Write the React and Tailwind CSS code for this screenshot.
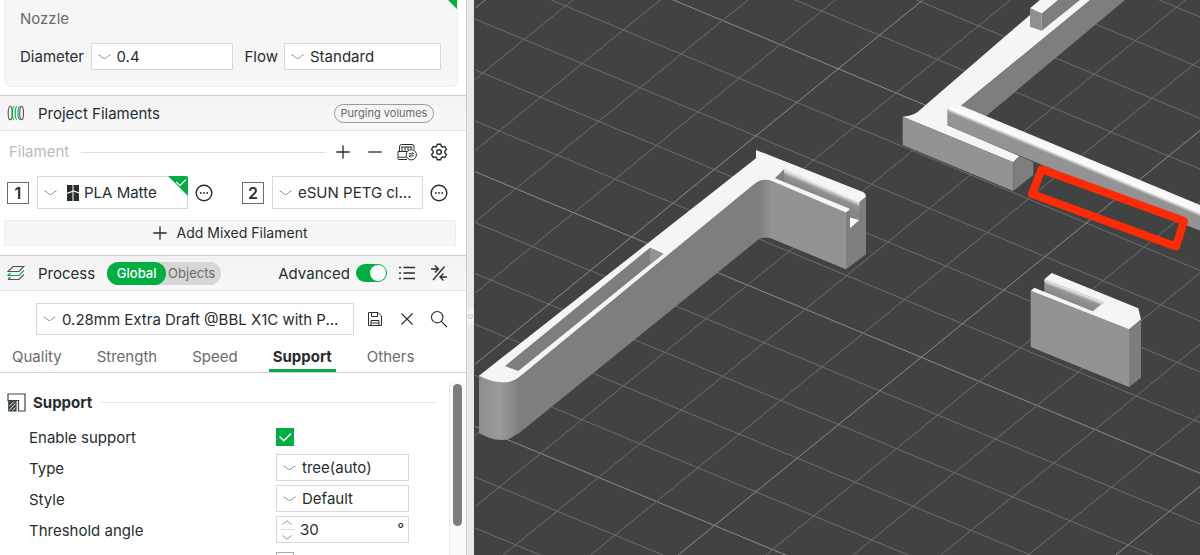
import React, { useState } from 'react';

const Chevron = ({ className = '' }) => (
  <svg viewBox="0 0 13 6" fill="none" stroke="#8f9394" className={`w-[13px] h-1.5 pointer-events-none ${className}`}>
    <path d="M0.5 1 C3.5 1.8 4.5 4.5 6.5 4.5 S9.5 1.8 12.5 1" />
  </svg>
);

const SelectBox = ({ id, label, value, className = '', pad = 'pl-[25px]', children }) => (
  <div className={`relative flex items-center bg-white border border-[#d9d9d9] ${className}`}>
    <Chevron className="absolute left-1.5" />
    {children}
    <select id={id} aria-label={label} className={`w-full h-full pt-0.5 appearance-none bg-transparent outline-none ${pad}`}>
      <option>{value}</option>
    </select>
  </div>
);

const IconButton = ({ label, children, onClick }) => (
  <button aria-label={label} onClick={onClick} className="w-5 h-5 shrink-0 flex items-center justify-center text-[#262e30]">
    {children}
  </button>
);

const MoreIcon = () => (
  <svg viewBox="0 0 18 18" className="w-[18px] h-[18px]" fill="none" stroke="currentColor" strokeWidth="1.4">
    <circle cx="9" cy="9" r="7.8" />
    <g fill="currentColor" stroke="none">
      <circle cx="5.8" cy="9" r="0.9" />
      <circle cx="9" cy="9" r="0.9" />
      <circle cx="12.2" cy="9" r="0.9" />
    </g>
  </svg>
);

const PlusIcon = () => (
  <svg viewBox="0 0 14 14" className="w-3.5 h-3.5" fill="none" stroke="currentColor" strokeWidth="1.3">
    <path d="M7 0.3V13.7M0.3 7H13.7" />
  </svg>
);

const MinusIcon = () => (
  <svg viewBox="0 0 14 14" className="w-3.5 h-3.5" fill="none" stroke="currentColor" strokeWidth="1.3">
    <path d="M0.3 7H13.7" />
  </svg>
);

const AmsIcon = () => (
  <svg viewBox="0 0 20 18" className="w-5 h-[18px]" fill="none" stroke="currentColor" strokeWidth="1">
    <path d="M2.5 8V3.5Q2.5 1.5 4.5 1.5H15Q17 1.5 17 3.5V6.5" />
    <path d="M5 4V8M8 4V8M11 4V7.5M14 4V6M4 4H15.5" />
    <path d="M10 8.5H1V15.5Q1 16.5 2 16.5H10M1.5 14.2H9.5" />
    <circle cx="14.3" cy="11.8" r="5.1" />
    <path d="M11.8 10.8H16.6L15.2 9.3M16.8 12.9H12L13.4 14.4" />
  </svg>
);

const GearIcon = () => (
  <svg viewBox="0 0 18 18" className="w-[18px] h-[18px]" fill="none" stroke="currentColor" strokeWidth="1.4" strokeLinejoin="round">
    <path d="M7.2 1.2h3.6l.5 2.1 1.3.75 2.1-.65 1.8 3.1-1.6 1.5v2l1.6 1.5-1.8 3.1-2.1-.65-1.3.75-.5 2.1H7.2l-.5-2.1-1.3-.75-2.1.65-1.8-3.1L3.1 10V8L1.5 6.5l1.8-3.1 2.1.65 1.3-.75z" />
    <circle cx="9" cy="9" r="2.3" />
  </svg>
);

const SpoolIcon = () => (
  <svg viewBox="0 0 18 18" className="w-[18px] h-[18px]" fill="none" strokeWidth="1.1">
    <ellipse cx="3.2" cy="9" rx="2" ry="6.8" stroke="#4d5557" />
    <path d="M7.2 2.5C4.8 3.5 4.8 14.5 7.2 15.5M10 2.5C7.6 3.5 7.6 14.5 10 15.5M12.8 2.5C10.4 3.5 10.4 14.5 12.8 15.5" stroke="#00ae42" />
    <ellipse cx="14.6" cy="9" rx="1.9" ry="6.8" stroke="#4d5557" />
  </svg>
);

const LayersIcon = () => (
  <svg viewBox="0 0 18 16" className="w-[18px] h-4" fill="none" strokeWidth="1.1">
    <path d="M6 1.5H16.8L12 6.5H1Z" stroke="#4d5557" />
    <path d="M1 14.5H12L16.8 9.5M1 14.5L3.5 12" stroke="#4d5557" />
    <path d="M3.5 8L1 10.5H12L16.8 5.5" stroke="#00ae42" />
  </svg>
);

const ListIcon = () => (
  <svg viewBox="0 0 18 16" className="w-[18px] h-4" stroke="currentColor" strokeWidth="1.4">
    <path d="M1 2.5H3M1 8H3M1 13.5H3M5.5 2.5H17M5.5 8H17M5.5 13.5H17" />
  </svg>
);

const CompareIcon = () => (
  <svg viewBox="0 0 18 18" className="w-[18px] h-[18px]" fill="none" stroke="currentColor" strokeWidth="1.3">
    <path d="M3 16L14.5 2.5M1 5H8.5M5 1.5L8.5 5L5 8.5M17 13H10M13.5 9.5L10 13L13.5 16.5" />
  </svg>
);

const SaveIcon = () => (
  <svg viewBox="0 0 16 16" className="w-4 h-4" fill="none" stroke="currentColor" strokeWidth="1">
    <path d="M1.5 1.5H11L14.5 5V14.5H1.5ZM4.5 1.5V5.5H10.5V1.5M4 14.5V9.5H12V14.5M4 12H12" />
  </svg>
);

const CloseIcon = () => (
  <svg viewBox="0 0 14 14" className="w-3.5 h-3.5" stroke="currentColor" strokeWidth="1.1">
    <path d="M1.5 1.5L12.5 12.5M12.5 1.5L1.5 12.5" />
  </svg>
);

const SearchIcon = () => (
  <svg viewBox="0 0 18 18" className="w-[18px] h-[18px]" fill="none" stroke="currentColor" strokeWidth="1.1">
    <circle cx="7.2" cy="7.2" r="5.7" />
    <path d="M11.3 11.3L17 17" />
  </svg>
);

const SupportIcon = () => (
  <svg viewBox="0 0 19 19" className="w-[19px] h-[19px]" fill="none" stroke="#3c4446" strokeWidth="1.2">
    <path d="M1 1H18V18H11.5V7.5H1Z" />
    <path d="M1.8 8H9V18H1.8Z" fill="#3c4446" />
    <path d="M2.5 13L7 8.5M2.5 17L8.5 10.5M5.5 17.5L8.5 14.5" stroke="#fff" strokeWidth="0.9" />
  </svg>
);

const BrandIcon = () => (
  <svg viewBox="0 0 12 16" className="absolute left-[29px] w-3 h-4" fill="#262e30">
    <path d="M0 0H5.5V5.7L0 7.8ZM6.5 0H12V7.3L6.5 5.2ZM0 9L5.5 6.9V16H0ZM6.5 6.5L12 8.6V16H6.5Z" />
  </svg>
);

const Corner = ({ className = '' }) => (
  <svg viewBox="0 0 20 20" className={`absolute w-5 h-5 ${className}`}>
    <path d="M0 0H18Q20 0 20 2V20Z" fill="#00ae42" />
    <path d="M8 6L12 9.5L18 3.5" fill="none" stroke="#fff" strokeWidth="1.1" />
  </svg>
);

const CheckBox = ({ id, label, defaultChecked }) => (
  <div className="grid w-[18px] h-[18px]">
    <input id={id} aria-label={label} type="checkbox" defaultChecked={defaultChecked} className="peer col-start-1 row-start-1 w-full h-full appearance-none border border-[#a9a9a9] checked:border-[#00ae42] checked:bg-[#00ae42]" />
    <svg viewBox="0 0 18 18" className="col-start-1 row-start-1 w-full h-full hidden peer-checked:block pointer-events-none" fill="none" stroke="#fff" strokeWidth="1.3">
      <path d="M3.5 8.5L7.8 12.8L15 5.5" />
    </svg>
  </div>
);

const SectionBar = ({ icon, title, children }) => (
  <div className="h-9 flex items-center pl-[7px] pr-4 border-t border-b border-t-[#cfcfcf] border-b-[#e4e4e4] bg-linear-to-b from-[#f1f1f1] to-[#f9f9f9]">
    {icon}
    <h2 className="ml-[13px] pt-0.5">{title}</h2>
    {children}
  </div>
);

const Filament = ({ index, name, children, pad }) => (
  <div className="flex items-center">
    <span className="w-[22px] h-[22px] flex items-center justify-center border border-[#6b6b6b] font-semibold text-base">{index}</span>
    <SelectBox label={`Filament ${index}`} value={name} pad={pad} className="ml-2 w-[151px] h-[33px]">
      {children}
    </SelectBox>
    <div className="ml-1.5 flex">
      <IconButton label="More"><MoreIcon /></IconButton>
    </div>
  </div>
);

const TABS = ['Quality', 'Strength', 'Speed', 'Support', 'Others'];

const Row = ({ id, label, children }) => (
  <div className="h-[31px] flex items-center">
    <label htmlFor={id} className="w-[247px] pt-1">{label}</label>
    {children}
  </div>
);

const Sidebar = () => {
  const [tab, setTab] = useState('Support');
  const [scope, setScope] = useState('Global');

  return (
    <aside className="w-[466px] h-full shrink-0 overflow-hidden flex flex-col bg-white">
      <section className="relative ml-1 mr-2 pl-[15px] pr-4 pt-[9px] pb-4 bg-[#f6f6f6] border border-t-0 border-[#efefef] rounded-b-md overflow-hidden">
        <Corner className="-right-px -top-2.5" />
        <h3 className="text-[#6b6b6b] leading-5">Nozzle</h3>
        <div className="mt-[14px] flex items-center">
          <label htmlFor="diameter" className="pt-0.5">Diameter</label>
          <SelectBox id="diameter" value="0.4" className="ml-auto w-[142px] h-[27px]" />
          <label htmlFor="flow" className="ml-3 pt-0.5">Flow</label>
          <SelectBox id="flow" value="Standard" className="ml-1.5 w-[157px] h-[27px]" />
        </div>
      </section>

      <div className="mt-2 shrink-0">
        <SectionBar icon={<SpoolIcon />} title="Project Filaments">
          <button className="ml-auto mr-4 w-[100px] h-[19px] flex items-center justify-center rounded-full border border-[#9b9b9b] text-[11px] text-[#6b6b6b]">Purging volumes</button>
        </SectionBar>
      </div>

      <section className="shrink-0 pt-[11px] pb-[9px]">
        <div className="flex items-center pl-[9px] pr-[17px]">
          <h3 className="text-[#bcbcbc] leading-5">Filament</h3>
          <div className="ml-3 mr-2 flex-1 h-px bg-[#dedede]" />
          <div className="flex gap-3">
            <IconButton label="Add filament"><PlusIcon /></IconButton>
            <IconButton label="Remove filament"><MinusIcon /></IconButton>
            <IconButton label="Sync filaments"><AmsIcon /></IconButton>
            <IconButton label="Settings"><GearIcon /></IconButton>
          </div>
        </div>
        <div className="mt-[14px] flex justify-between pl-[7px] pr-[17px]">
          <Filament index={1} name="PLA Matte" pad="pl-[46px]">
            <BrandIcon />
            <Corner className="-right-px -top-px" />
          </Filament>
          <Filament index={2} name="eSUN PETG cl..." pad="pl-[25px]" />
        </div>
        <button className="ml-1 mt-[11px] w-[452px] h-[26px] flex items-center justify-center gap-2.5 bg-[#f7f7f7] border border-[#eeeeee] text-sm">
          <PlusIcon />
          Add Mixed Filament
        </button>
      </section>

      <div className="shrink-0">
        <SectionBar icon={<LayersIcon />} title="Process">
          <div className="ml-3 flex h-[23px] rounded-full bg-[#d6d6d6] text-[13px] leading-[23px]">
            <button onClick={() => setScope('Global')} className={`w-[59px] rounded-full ${scope === 'Global' ? 'bg-[#00ae42] text-white font-medium' : 'text-[#6b6b6b]'}`}>Global</button>
            <button onClick={() => setScope('Objects')} className={`w-[55px] pr-1 rounded-full ${scope === 'Objects' ? 'bg-[#00ae42] text-white font-medium' : 'text-[#6b6b6b]'}`}>Objects</button>
          </div>
          <label htmlFor="advanced" className="ml-auto pt-0.5">Advanced</label>
          <input
            id="advanced"
            type="checkbox"
            role="switch"
            defaultChecked
            className="ml-1.5 mr-2.5 w-[31px] h-[18px] appearance-none rounded-full bg-[#c4c4c4] checked:bg-[#00ae42] p-px flex before:block before:w-4 before:h-4 before:rounded-full before:bg-white checked:before:ml-auto"
          />
          <div className="flex gap-3 mr-px">
            <IconButton label="Parameter list"><ListIcon /></IconButton>
            <IconButton label="Compare presets"><CompareIcon /></IconButton>
          </div>
        </SectionBar>
      </div>

      <div className="shrink-0 mt-3 pl-9 pr-[17px] flex items-center">
        <SelectBox label="Preset" value="0.28mm Extra Draft @BBL X1C with P..." className="w-[318px] h-8" />
        <div className="ml-auto flex gap-3">
          <IconButton label="Save"><SaveIcon /></IconButton>
          <IconButton label="Discard"><CloseIcon /></IconButton>
          <IconButton label="Search"><SearchIcon /></IconButton>
        </div>
      </div>

      <nav className="shrink-0 mt-2 h-[30px] flex gap-[27px] pl-2 border-b border-[#cfcfcf]">
        {TABS.map((name) => (
          <button
            key={name}
            onClick={() => setTab(name)}
            className={`px-1 pt-0.5 border-b-3 ${tab === name ? 'border-[#00ae42] font-bold text-[#262e30]' : 'border-transparent text-[#6b6b6b]'}`}
          >
            {name}
          </button>
        ))}
      </nav>

      <div className="flex-1 min-h-0 flex">
        <section className="flex-1 overflow-hidden pt-[17px]">
          <div className="flex items-center pl-[7px] pr-3 h-6">
            <SupportIcon />
            <h3 className="ml-[7px] pt-0.5 font-bold">Support</h3>
            <div className="ml-2 flex-1 h-px bg-[#e6e6e6]" />
          </div>
          <div className="pl-[29px] mt-[7px]">
            <Row id="enable" label="Enable support"><CheckBox id="enable" defaultChecked /></Row>
            <Row id="type" label="Type"><SelectBox id="type" value="tree(auto)" className="w-[133px] h-[27px]" /></Row>
            <Row id="style" label="Style"><SelectBox id="style" value="Default" className="w-[133px] h-[27px]" /></Row>
            <Row id="angle" label="Threshold angle">
              <div className="w-[133px] h-[27px] flex items-center border border-[#d9d9d9] bg-white pl-0.5 pr-1">
                <div className="w-4 flex flex-col items-center gap-0.5">
                  <button aria-label="Increase" className="h-2.5 flex items-center">
                    <svg viewBox="0 0 10 5" className="w-2.5 h-[5px]" fill="none" stroke="#8f9394"><path d="M0.5 4.5L5 0.8L9.5 4.5" /></svg>
                  </button>
                  <div className="w-3.5 h-px bg-[#d9d9d9]" />
                  <button aria-label="Decrease" className="h-2.5 flex items-center">
                    <svg viewBox="0 0 10 5" className="w-2.5 h-[5px]" fill="none" stroke="#8f9394"><path d="M0.5 0.5L5 4.2L9.5 0.5" /></svg>
                  </button>
                </div>
                <input id="angle" defaultValue="30" className="flex-1 min-w-0 ml-[5px] pt-0.5 bg-transparent outline-none" />
                <span>°</span>
              </div>
            </Row>
            <Row id="plate" label=""><CheckBox id="plate" label="On build plate only" /></Row>
          </div>
        </section>
        <div className="w-[17px] mt-2 pt-[3px] border-l border-[#ececec] bg-[#fafafa]">
          <div className="ml-[3px] w-[9px] h-[142px] rounded-full bg-[#7d7d7d]" />
        </div>
      </div>
    </aside>
  );
};

// bed grid: every fifth line is a major one
const GRID = [];
for (let k = -18; k <= 14; k++) {
  GRID.push({ key: `a${k}`, major: k % 5 === 0, y1: 171.7 + 50.9 * k, y2: 473.3 + 50.7 * k });
}
for (let k = -6; k <= 16; k++) {
  GRID.push({ key: `b${k}`, major: k % 5 === 0, y1: 364.3 + 71.2 * k, y2: -225.5 + 71.2 * k });
}

const Scene = () => (
  <svg viewBox="474 0 726 555" preserveAspectRatio="xMinYMin slice" className="block w-full h-full">
    <defs>
      <linearGradient id="round">
        <stop offset="0" stopColor="#8e8e8e" />
        <stop offset="0.5" stopColor="#9a9a9a" />
        <stop offset="1" stopColor="#7e7e7e" />
      </linearGradient>
      <linearGradient id="bend">
        <stop offset="0" stopColor="#7e7e7e" />
        <stop offset="0.6" stopColor="#8c8c8c" />
        <stop offset="1" stopColor="#939393" />
      </linearGradient>
      <linearGradient id="lip" gradientUnits="userSpaceOnUse" x1="1071" y1="151.5" x2="1066.85" y2="161.5">
        <stop offset="0" stopColor="#f4f5f4" />
        <stop offset="0.65" stopColor="#fbfbfb" />
        <stop offset="1" stopColor="#939393" />
      </linearGradient>
      <linearGradient id="slot" gradientUnits="userSpaceOnUse" x1="824" y1="186.5" x2="819.7" y2="196.5">
        <stop offset="0" stopColor="#f4f5f4" />
        <stop offset="0.45" stopColor="#929292" />
        <stop offset="1" stopColor="#868686" />
      </linearGradient>
      <linearGradient id="notch" gradientUnits="userSpaceOnUse" x1="1076" y1="291.5" x2="1072.15" y2="301.5">
        <stop offset="0" stopColor="#f4f5f4" />
        <stop offset="0.4" stopColor="#949494" />
        <stop offset="1" stopColor="#888888" />
      </linearGradient>
    </defs>

    <g>
      {GRID.map((l) => (
        <line key={l.key} x1="475" x2="1200" y1={l.y1} y2={l.y2} stroke={l.major ? '#8b8c8b' : '#6c6e6d'} strokeWidth="1" />
      ))}
    </g>

    {/* long bracket */}
    <path d="M479 375.7V433.3C486 437 493 440 501.7 440C510 440 514 436 521 431L521 372L502 380Z" fill="url(#round)" />
    <path d="M517 372L755 178H760V238.3L521 431.5L517 434.5Z" fill="#7e7e7e" />
    <path d="M759 178H773V239Q766 236 759 239Z" fill="url(#bend)" />
    <path d="M772.5 178L846 208V269.3L772.5 239Z" fill="#939393" />
    <path d="M773 180L784 169.3L858 200L860 202V220L850 217.5V212Z" fill="url(#slot)" />
    <path d="M773 180L784 169.3V184.5Z" fill="#7e7e7e" />
    <path d="M479 375.7L756 158.3L756 150L863 192Q866 193.5 866 197L860 202L784 169.3L775 178.2L849.3 208.5L849.5 210.5L846 212.5L772 181Q762 177 753 185L521 375.5C514 382 506 382.5 501.7 382.3C494 382 486 379.5 479 375.7Z" fill="#f4f5f4" />
    <path d="M846 212.5L850 209.5V228.3L859.5 220V202L866 196.7V254.3L846 269.3Z" fill="#7e7e7e" />
    <path d="M850 217.5L859.5 220L850 228.3Z" fill="#f9f9f9" />
    <path d="M505 366L650 247.7L663.3 253.7L518.3 371Z" fill="#7e7e7e" />
    <path d="M650 247.7L663.3 253.7L650 264.5Z" fill="#939393" />

    {/* frame with cross bar */}
    <path d="M1090 0H1125L985 117L960 107Z" fill="#7e7e7e" />
    <path d="M902.7 116.7Q910 116.5 917 112.5L1030 15L1046 0H1090L960.7 106L947.3 125L1019.3 156L1013.3 162.3Z" fill="#f4f5f4" />
    <path d="M1041.7 13.3L1057.7 0H1080L1041.7 30.7Z" fill="#7e7e7e" />
    <path d="M1030 8.3L1040 0H1057.7L1041.7 13.3Z" fill="#f4f5f4" />
    <path d="M1030 8.3L1041.7 13.3V30.7L1030 26.7Z" fill="#8f8f8f" />
    <path d="M902.7 116.7L1013.3 162.3V191L902.7 145Z" fill="#939393" />
    <path d="M1013.3 162.3L1019.3 156L1033.3 162V175L1013.3 191Z" fill="#7e7e7e" />
    <path d="M947.3 109.3L956 105L1200 208V230.7L947.3 125.5Z" fill="#939393" />
    <path d="M947.3 109.3Q951 104 957 104L1200 205V217L948 112Z" fill="url(#lip)" />

    {/* clip */}
    <path d="M1030.7 290.7L1129 329.3V387L1030.7 347Z" fill="#939393" />
    <path d="M1129 329.3L1141 319.3V377.7L1129 387Z" fill="#7d7d7d" />
    <path d="M1044.3 279.3L1104 302.3L1092.7 312L1044.3 292.5Z" fill="url(#notch)" />
    <path d="M1030.7 290.7L1034.3 287.7L1092.7 311.3L1104 302.3L1044.3 279.3L1051.7 273L1138.3 308.3L1141 319.3L1129 329.3Z" fill="#f4f5f4" />

    <path d="M1041.7 169.3L1184 221L1176 246.5L1032 194Z" fill="none" stroke="#ff2a06" strokeWidth="8" strokeLinejoin="round" />
  </svg>
);

export default function App() {
  return (
    <div className="h-screen flex overflow-hidden text-[15px] text-[#262e30] font-['Inter',sans-serif]">
      <Sidebar />
      <div className="w-2 shrink-0 flex flex-col justify-center border-l border-[#cccccc] bg-[#e8eaea]">
        <div className="mt-[78px] h-4 flex items-center justify-center bg-[#f1f2f2]">
          <span className="w-[5px] h-[5px] rounded-full border border-[#c4c6c6]" />
        </div>
      </div>
      <main className="flex-1 min-w-0 bg-[#414342]">
        <Scene />
      </main>
    </div>
  );
}
